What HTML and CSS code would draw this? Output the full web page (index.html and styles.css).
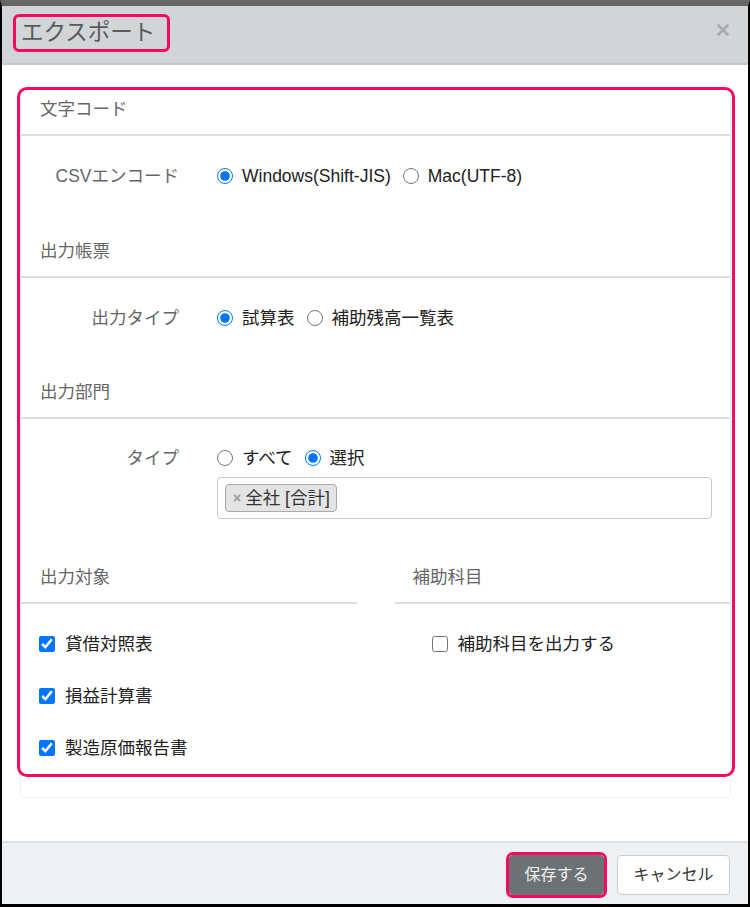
FILE: index.html
```html
<!DOCTYPE html>
<html lang="ja">
<head>
<meta charset="utf-8">
<title>エクスポート</title>
<link rel="stylesheet" href="styles.css">
</head>
<body>
<div class="modal">
  <div class="modal-header">
    <h1 class="modal-title">エクスポート</h1>
    <span class="close" aria-label="閉じる">
      <svg width="12" height="12" viewBox="0 0 12 12"><path d="M1.5 1.5 L10.5 10.5 M10.5 1.5 L1.5 10.5" stroke="#a8abad" stroke-width="2.6" stroke-linecap="round" fill="none"/></svg>
    </span>
  </div>
  <div class="modal-body">
    <div class="card">
      <div class="highlight"></div>

      <div class="sec-head">文字コード</div>
      <div class="sec-body s1">
        <div class="form-row">
          <div class="row-label">CSVエンコード</div>
          <div class="controls">
            <label class="opt"><input type="radio" name="enc" checked><span>Windows(Shift-JIS)</span></label>
            <label class="opt"><input type="radio" name="enc"><span>Mac(UTF-8)</span></label>
          </div>
        </div>
      </div>

      <div class="sec-head">出力帳票</div>
      <div class="sec-body s2">
        <div class="form-row">
          <div class="row-label">出力タイプ</div>
          <div class="controls">
            <label class="opt"><input type="radio" name="type" checked><span>試算表</span></label>
            <label class="opt"><input type="radio" name="type"><span>補助残高一覧表</span></label>
          </div>
        </div>
      </div>

      <div class="sec-head">出力部門</div>
      <div class="sec-body s3">
        <div class="form-row">
          <div class="row-label">タイプ</div>
          <div class="controls">
            <label class="opt"><input type="radio" name="dept"><span>すべて</span></label>
            <label class="opt"><input type="radio" name="dept" checked><span>選択</span></label>
          </div>
        </div>
        <div class="tag-box">
          <span class="chip"><span class="chip-x">×</span><span>全社 [合計]</span></span>
        </div>
      </div>

      <div class="cols">
        <div class="col">
          <div class="sec-head">出力対象</div>
          <div class="col-body left">
            <label class="check"><input type="checkbox" checked><span>貸借対照表</span></label>
            <label class="check"><input type="checkbox" checked><span>損益計算書</span></label>
            <label class="check"><input type="checkbox" checked><span>製造原価報告書</span></label>
          </div>
        </div>
        <div class="col">
          <div class="sec-head right">補助科目</div>
          <div class="col-body right">
            <label class="check"><input type="checkbox"><span>補助科目を出力する</span></label>
          </div>
        </div>
      </div>
    </div>
  </div>
  <div class="modal-footer">
    <button class="btn btn-save">保存する</button>
    <button class="btn btn-cancel">キャンセル</button>
  </div>
</div>
</body>
</html>
```
FILE: styles.css
```css
* { box-sizing: border-box; }
html, body { margin: 0; padding: 0; background: #fff; }
body {
  font-family: "Liberation Sans", "Noto Sans CJK JP", sans-serif;
  font-size: 17.5px;
  color: #222;
}
.modal {
  width: 750px;
  height: 907px;
  display: flex;
  flex-direction: column;
  border-left: 2px solid #000;
  border-right: 2px solid #000;
  border-bottom: 3px solid #000;
  border-top: 6px solid #666;
  background: #fff;
}
.modal-header {
  flex: none;
  height: 59px;
  background: #d1d5d8;
  border-bottom: 2px solid #c4c8cb;
  display: flex;
  justify-content: space-between;
  align-items: flex-start;
  padding: 8px 19px 0 11px;
}
.modal-title {
  margin: 0;
  font-weight: normal;
  font-size: 22.5px;
  line-height: 32px;
  color: #5a5a5a;
  border: 3px solid #f50a62;
  border-radius: 6px;
  padding: 0 12px 0 5px;
}
.close { display: block; margin-top: 10px; width: 12px; height: 12px; }
.close svg { display: block; }
.modal-body {
  flex: 1;
  padding: 23px 17px 0 18px;
}
.card {
  position: relative;
  height: 710px;
  border: 1px solid #f0f0f0;
  border-radius: 4px;
}
.highlight {
  position: absolute;
  left: -4px;
  top: -2px;
  width: 718px;
  height: 690px;
  border: 3px solid #f50a62;
  border-radius: 10px;
  pointer-events: none;
}
.sec-head {
  height: 47px;
  padding: 9px 19px 0;
  line-height: 22px;
  color: #666;
  border-bottom: 2px solid #dedede;
}
.sec-head.right { padding-left: 18px; }
.sec-body.s1 { height: 95px; padding-top: 25px; }
.sec-body.s2 { height: 94px; padding-top: 25px; }
.sec-body.s3 { height: 138px; padding-top: 24px; }
.form-row { display: flex; align-items: center; height: 30px; }
.row-label {
  flex: none;
  width: 158px;
  text-align: right;
  color: #666;
  line-height: 22px;
}
.controls { margin-left: 38px; display: flex; align-items: center; }
.opt {
  display: flex;
  align-items: center;
  gap: 9px;
  margin-right: 12px;
  line-height: 22px;
}
input[type="radio"], input[type="checkbox"] {
  width: 16px;
  height: 16px;
  margin: 0;
  flex: none;
  accent-color: #0075ff;
}
.tag-box {
  margin: 4px 0 0 196px;
  width: 495px;
  height: 42px;
  border: 1px solid #c8c8c8;
  border-radius: 4px;
  padding: 6px 7px;
}
.chip {
  display: inline-flex;
  align-items: center;
  height: 28px;
  background: #e4e4e4;
  border: 1px solid #aaa;
  border-radius: 4px;
  padding: 0 6px 0 7px;
  color: #333;
  line-height: 22px;
}
.chip-x {
  color: #999;
  font-size: 14px;
  font-weight: bold;
  margin-right: 4px;
}
.cols {
  display: grid;
  grid-template-columns: 1fr 1fr;
  column-gap: 38px;
}
.col-body {
  display: flex;
  flex-direction: column;
  gap: 28px;
  padding-top: 28px;
}
.col-body.left { padding-left: 18px; }
.col-body.right { padding-left: 37px; }
.check {
  display: flex;
  align-items: center;
  gap: 10px;
  height: 24px;
  line-height: 22px;
}
.modal-footer {
  flex: none;
  height: 63px;
  border-top: 2px solid #dcdee1;
  background: #eef1f4;
  display: flex;
  justify-content: flex-end;
  align-items: flex-start;
  gap: 13px;
  padding: 12px 18px 0 0;
}
.btn {
  height: 40px;
  font-family: "Liberation Sans", "Noto Sans CJK JP", sans-serif;
  font-size: 16px;
  line-height: 22px;
  border-radius: 4px;
  padding: 0;
  white-space: nowrap;
  cursor: pointer;
}
.btn-save {
  background: #6c7175;
  color: #f2f2f2;
  border: 1px solid #6c7175;
  outline: 3px solid #f50a62;
  outline-offset: 0;
  width: 95px;
}
.btn-cancel {
  background: #fff;
  color: #333;
  border: 1px solid #ccc;
  width: 113px;
}
```
